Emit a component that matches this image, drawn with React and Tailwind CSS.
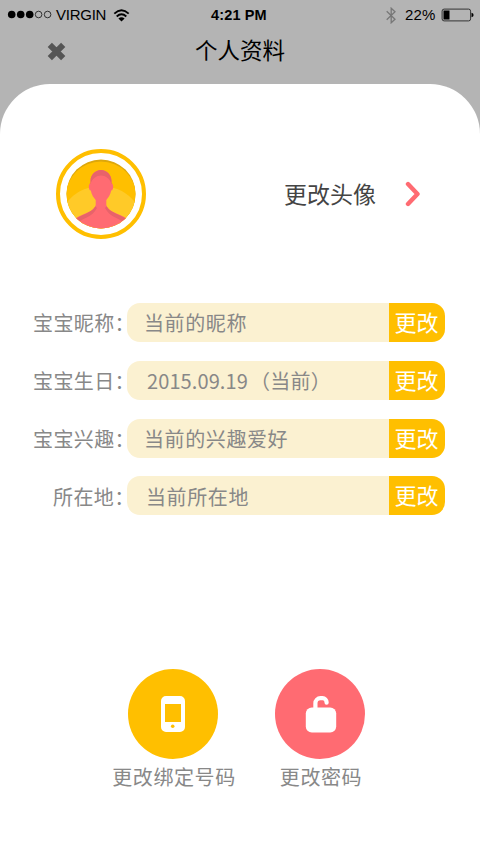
import React from 'react';

const rows = [
  { label: '宝宝昵称：', value: '当前的昵称', labelPad: 'pl-[33px]', valuePad: 'pl-[17px] tracking-[0.6px]', gap: 'leading-[39px]' },
  { label: '宝宝生日：', value: '2015.09.19', note: '（当前）', labelPad: 'pl-[33px]', valuePad: 'pl-[20px] tracking-[0.1px]', gap: 'mt-[19px] leading-[39px]' },
  { label: '宝宝兴趣：', value: '当前的兴趣爱好', labelPad: 'pl-[33px]', valuePad: 'pl-[17px] tracking-[0.6px]', gap: 'mt-[19px] leading-[39px]' },
  { label: '所在地：', value: '当前所在地', labelPad: 'pl-[53px]', valuePad: 'pl-[19px] tracking-[0.6px]', gap: 'mt-[18px] leading-[41px]' },
];

export default function App() {
  return (
    <div className="w-[480px] h-[854px] overflow-hidden bg-[#b4b4b4] font-['Noto_Sans_CJK_SC',sans-serif]">
      <StatusBar />
      <header className="grid grid-cols-[195px_1fr] h-[54px]">
        <button className="pl-[47px] pt-[12px] self-start" aria-label="close">
          <svg width="19" height="19" viewBox="0 0 19 19" className="block">
            <path d="M2.8 2.8 L16.2 16.2 M16.2 2.8 L2.8 16.2" stroke="#555" strokeWidth="6" />
          </svg>
        </button>
        <h1 className="text-[22.5px] leading-[38px] text-black">个人资料</h1>
      </header>

      <main className="h-[770px] bg-white rounded-t-[50px]">
        <section className="flex items-center h-[90px] translate-y-[65px]">
          <Avatar />
          <span className="ml-[138px] w-[121px] pb-[2px] text-[23px] leading-[30px] text-[#444]">更改头像</span>
          <svg width="16" height="26" viewBox="0 0 16 26">
            <path d="M3 3 L12.5 13 L3 23" fill="none" stroke="#ff6b72" strokeWidth="4.4" strokeLinecap="round" strokeLinejoin="round" />
          </svg>
        </section>

        <section className="pt-[129px]">
          {rows.map((row) => (
            <Row key={row.label} {...row} />
          ))}
        </section>

        <section className="grid grid-cols-[147px_147px] pt-[154px] pl-[99px]">
          <Action label="更改绑定号码" color="bg-[#ffbf00]">
            <svg width="24" height="36" viewBox="0 0 24 36">
              <path fillRule="evenodd" fill="#fff" d="M5 0h14a5 5 0 0 1 5 5v26a5 5 0 0 1-5 5H5a5 5 0 0 1-5-5V5a5 5 0 0 1 5-5zM4 8v18h16V8z" />
              <circle cx="11.7" cy="30.2" r="1.8" fill="#ffbf00" />
            </svg>
          </Action>
          <Action label="更改密码" color="bg-[#ff6b72]">
            <svg width="32" height="38" viewBox="0 0 32 38" className="ml-[2px]">
              <rect x="0.8" y="12.5" width="30.4" height="25" rx="6" fill="#fff" />
              <path d="M10.4 15V8.200a5 5 0 0 1 5-5h2.200a4 4 0 0 1 4 4v.5" fill="none" stroke="#fff" strokeWidth="4.2" strokeLinecap="round" />
            </svg>
          </Action>
        </section>
      </main>
    </div>
  );
}

function Row({ label, value, note, labelPad, valuePad, gap }) {
  return (
    <div className={`flex h-[39px] text-[20px] whitespace-nowrap text-[#888] ${gap}`}>
      <div className={`w-[127px] shrink-0 tracking-[0.4px] ${labelPad}`}>{label}</div>
      <div className={`w-[262px] shrink-0 rounded-l-[13px] bg-[#fbf1d1] ${valuePad}`}>
        {value}
        {note && <span className="ml-[2px] tracking-[0.3px]">{note}</span>}
      </div>
      <button className="w-[56px] rounded-r-[13px] bg-[#ffbf00] pr-[1px] text-[22px] leading-[37px] pb-[2px] text-white">更改</button>
    </div>
  );
}

function Action({ label, color, children }) {
  return (
    <div className="flex flex-col items-center">
      <button className={`flex size-[90px] items-center justify-center rounded-full ${color}`}>{children}</button>
      <span className="mt-[3px] pl-[3px] text-[20px] leading-[30px] tracking-[0.6px] whitespace-nowrap text-[#888]">{label}</span>
    </div>
  );
}

function Avatar() {
  return (
    <svg width="90" height="90" viewBox="0 0 90 90" className="ml-[56px] shrink-0">
      <defs>
        <clipPath id="face">
          <circle cx="45" cy="45" r="34.5" />
        </clipPath>
        <clipPath id="person">
          <path d={PERSON} />
        </clipPath>
      </defs>
      <circle cx="45" cy="45" r="43" fill="#fff" stroke="#ffbf00" strokeWidth="4" />
      <g clipPath="url(#face)">
        <rect width="90" height="90" fill="#dda70a" />
        <circle cx="45" cy="48" r="35.5" fill="#ffbf00" />
        <circle cx="45" cy="81" r="44" fill="#ffca28" />
        <path d={PERSON} fill="#ff6b72" />
        <g clipPath="url(#person)">
          <path fill="#e8636a" d="M30 18H60V35H55.500C52 23.500 38 23.500 34.500 35H30Z" />
          <path fill="#e8636a" d="M14 78C20 64 32 68 39 57L41 59C35 70 28 67 18 77ZM76 78C70 64 58 68 51 57L49 59C55 70 62 67 72 77Z" />
        </g>
      </g>
    </svg>
  );
}

const PERSON =
  'M45 21C51 21 55.500 26 55.500 32V34.500C57.800 34.500 57.800 41 55.200 41.500C54.500 46 52 49 50.300 51V56C51.500 61 58 63.500 64 66C68 67.500 70 69 72 71V82H18V71C20 69 22 67.500 26 66C32 63.500 38.500 61 39.700 56V51C38 49 35.500 46 34.800 41.500C32.200 41 32.200 34.500 34.500 34.500V32C34.500 26 39 21 45 21Z';

function StatusBar() {
  return (
    <div className="grid grid-cols-[56px_155px_175px_94px] h-[30px] items-center font-['Liberation_Sans',sans-serif] text-[15px] leading-[30px] text-black">
      <svg width="56" height="30" viewBox="0 0 56 30">
        <circle cx="11.7" cy="14.5" r="3.8" />
        <circle cx="20.7" cy="14.5" r="3.8" />
        <circle cx="29.7" cy="14.5" r="3.8" />
        <circle cx="38.6" cy="14.5" r="3.3" fill="none" stroke="#222" strokeWidth="0.9" />
        <circle cx="47.6" cy="14.5" r="3.3" fill="none" stroke="#222" strokeWidth="0.9" />
      </svg>
      <div className="flex items-center">
        <span className="w-[57px] tracking-[-0.25px]">VIRGIN</span>
        <svg width="17" height="13" viewBox="0 0 17 13" fill="none" stroke="#000" strokeWidth="1.9">
          <path d="M1.3 4.6Q8.5 -1.9 15.7 4.6M3.7 7.5Q8.5 3.1 13.3 7.5" />
          <path d="M8.5 12.5L5.4 9.6Q8.5 6.9 11.6 9.6Z" fill="#000" stroke="none" />
        </svg>
      </div>
      <span className="font-bold text-[14.5px] tracking-[0.15px]">4:21 PM</span>
      <div className="flex items-center">
        <svg width="10" height="17" viewBox="0 0 10 17" className="shrink-0" fill="none" stroke="#777" strokeWidth="1.3">
          <path d="M0.7 4.3L9 12.2L5.2 15.8V1.2L9 4.8L0.7 12.7" />
        </svg>
        <span className="ml-[9px] w-[36px] shrink-0 tracking-[0.2px]">22%</span>
        <svg width="33" height="14" viewBox="0 0 33 14" className="shrink-0">
          <rect x="1.1" y="1.1" width="28.5" height="11.8" rx="2" fill="none" stroke="#333" strokeWidth="1" />
          <rect x="2.5" y="2.5" width="6" height="9" />
          <path d="M30.5 4.7Q32.6 5 32.6 7Q32.6 9 30.5 9.3Z" />
        </svg>
      </div>
    </div>
  );
}
